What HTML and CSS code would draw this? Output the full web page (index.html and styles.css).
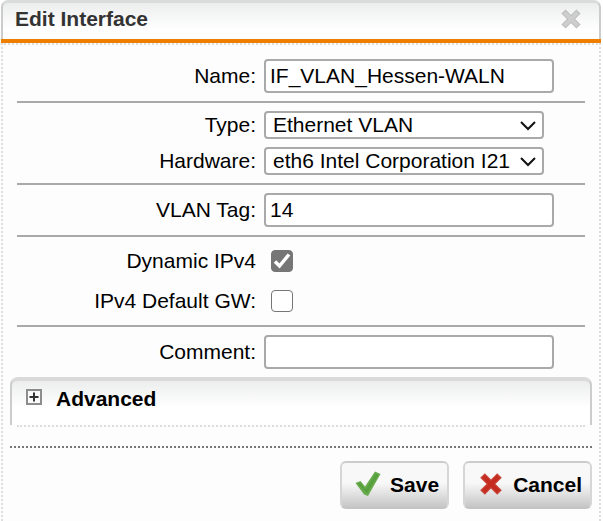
FILE: index.html
```html
<!DOCTYPE html>
<html lang="en">
<head>
<meta charset="utf-8">
<title>Edit Interface</title>
<link rel="stylesheet" href="styles.css">
</head>
<body>
<form class="dialog">
  <header class="dialog-header">
    <h1 class="dialog-title">Edit Interface</h1>
    <button type="button" class="close" aria-label="Close">
      <svg width="20" height="20" viewBox="0 0 20 20"><path d="M2.500 2.500L17.500 17.500M17.500 2.500L2.500 17.500" stroke="#c0c0c0" stroke-width="6"/><path d="M3.500 3.500L16.500 16.500M16.500 3.500L3.500 16.500" stroke="#cecece" stroke-width="3.500"/></svg>
    </button>
  </header>
  <div class="dialog-body">
    <div class="fields">
      <div class="group">
        <div class="row"><label for="name">Name:</label><input class="text" id="name" type="text" value="IF_VLAN_Hessen-WALN"></div>
      </div>
      <div class="group">
        <div class="row">
          <label for="type">Type:</label>
          <div class="select">
            <select id="type"><option>Ethernet VLAN</option></select>
            <svg class="chevron" width="16" height="10" viewBox="0 0 16 10"><path d="M1 1L8 8L15 1" fill="none" stroke="#111" stroke-width="2"/></svg>
          </div>
        </div>
        <div class="row">
          <label for="hardware">Hardware:</label>
          <div class="select">
            <select id="hardware"><option>eth6 Intel Corporation I211</option></select>
            <svg class="chevron" width="16" height="10" viewBox="0 0 16 10"><path d="M1 1L8 8L15 1" fill="none" stroke="#111" stroke-width="2"/></svg>
          </div>
        </div>
      </div>
      <div class="group">
        <div class="row"><label for="tag">VLAN Tag:</label><input class="text" id="tag" type="text" value="14"></div>
      </div>
      <div class="group checks">
        <div class="row">
          <label for="dynamic">Dynamic IPv4</label>
          <div class="check">
            <input id="dynamic" type="checkbox" checked>
            <svg class="tick" width="22" height="22" viewBox="0 0 22 22"><path d="M4 11.500L8.500 16L18 4.500" fill="none" stroke="#fff" stroke-width="3.500"/></svg>
          </div>
        </div>
        <div class="row">
          <label for="gateway">IPv4 Default GW:</label>
          <div class="check">
            <input id="gateway" type="checkbox">
            <svg class="tick" width="22" height="22" viewBox="0 0 22 22"><path d="M4 11.500L8.500 16L18 4.500" fill="none" stroke="#fff" stroke-width="3.500"/></svg>
          </div>
        </div>
      </div>
      <div class="group">
        <div class="row"><label for="comment">Comment:</label><input class="text" id="comment" type="text"></div>
      </div>
    </div>
    <section class="advanced">
      <button type="button" class="advanced-toggle" aria-expanded="false">
        <svg width="16" height="16" viewBox="0 0 16 16"><rect x="1" y="1" width="14" height="14" fill="#fafafa" stroke="#8c8c8c" stroke-width="2"/><path d="M3.500 8H12.500M8 3.500V12.500" stroke="#333" stroke-width="2"/></svg>
        Advanced
      </button>
    </section>
    <footer class="actions">
      <button type="submit" class="button">
        <svg width="26" height="26" viewBox="0 0 26 26"><path d="M.5 12L5.500 10L10 15.500L20 .5L25.500 3L13 25L9 23.500Z" fill="#68ac4e"/><path d="M2.500 12.500L5 11.500L10.500 18.500L20.500 2.500L23.500 4L12 22.500Z" fill="#56a03d"/></svg>
        Save
      </button>
      <button type="button" class="button">
        <svg width="26" height="26" viewBox="0 0 26 26"><path d="M4.500 4.500L21.500 21.500M21.500 4.500L4.500 21.500" stroke="#c8453a" stroke-width="6.500"/><path d="M5.500 5.500L20.500 20.500M20.500 5.500L5.500 20.500" stroke="#c62b20" stroke-width="4"/></svg>
        Cancel
      </button>
    </footer>
  </div>
</form>
</body>
</html>
```
FILE: styles.css
```css
* {
  box-sizing: border-box;
}

body {
  margin: 0;
  background: #fff;
  color: #000;
  font: 21px/24px "Liberation Sans", Arial, sans-serif;
}

input,
select,
button {
  margin: 0;
  color: inherit;
  font: inherit;
}

.dialog {
  display: flex;
  flex-direction: column;
  min-height: 100vh;
  margin: 0 2px 0 1px;
}

.dialog-header {
  display: flex;
  justify-content: space-between;
  height: 39px;
  padding: 4px 18px 0 12px;
  border: 2px solid #ccc;
  border-top: 3px solid #dadcdb;
  border-bottom: 0;
  border-radius: 7px 7px 0 0;
  background: linear-gradient(#eceeed, #fff 75%);
}

.dialog-title {
  margin: 0;
  color: #333;
  font-size: 21px;
}

.close {
  height: 24px;
  padding: 0;
  border: 0;
  background: none;
}

.close svg,
.button svg,
.advanced-toggle svg {
  display: block;
}

.dialog-body {
  flex: 1;
  padding: 6px 7px 10px;
  border: 2px dotted #ddd;
  border-bottom: 0;
  background: #fdfdfd;
  box-shadow: 0 -4px #ee7f00;
  margin-top: 4px;
}

.fields {
  padding: 0 7px;
}

.group {
  display: grid;
  gap: 8px;
  padding: 8px 0;
  border-bottom: 2px solid #a9a9a9;
}

.group:last-child {
  border-bottom: 0;
}

.checks {
  gap: 16px;
  padding: 12px 0;
}

.row {
  display: grid;
  grid-template-columns: 239px minmax(0, 1fr);
  column-gap: 8px;
  align-items: center;
  padding-right: 31px;
}

label {
  text-align: right;
}

.text {
  width: 100%;
  height: 34px;
  padding: 0 4px;
  border: 2px solid #a9a9a9;
  border-radius: 4px;
  background: #fff;
}

.select {
  position: relative;
  margin-right: 10px;
}

select {
  display: block;
  width: 100%;
  height: 28px;
  padding: 0 32px 0 7px;
  appearance: none;
  border: 2px solid #a9a9a9;
  border-radius: 4px;
  background: #fff;
}

.chevron {
  position: absolute;
  top: 10px;
  right: 8px;
  pointer-events: none;
}

.check {
  position: relative;
  height: 24px;
  padding: 1px 7px;
}

.check input {
  display: block;
  width: 22px;
  height: 22px;
  appearance: none;
  border: 1px solid #767676;
  border-radius: 4px;
  background: #fff;
}

.check input:checked {
  background: #767676;
}

.tick {
  position: absolute;
  top: 1px;
  left: 7px;
  visibility: hidden;
  pointer-events: none;
}

.check input:checked + .tick {
  visibility: visible;
}

.advanced {
  height: 48px;
  border: 2px solid #ccc;
  border-top: 4px solid #dadada;
  border-bottom: 0;
  border-radius: 8px 8px 0 0;
  background: linear-gradient(#eceeed, #fff 60%);
}

.advanced-toggle {
  display: flex;
  align-items: center;
  gap: 14px;
  width: 100%;
  padding: 6px 14px;
  border: 0;
  background: none;
  font-weight: bold;
  text-align: left;
}

.advanced-toggle svg {
  margin-bottom: 4px;
}

.advanced::after {
  content: "";
  display: block;
  margin: 8px 5px 0;
  border-top: 2px dotted #ddd;
}

.actions {
  display: flex;
  justify-content: flex-end;
  gap: 14px;
  margin-top: 21px;
  padding-top: 13px;
  border-top: 2px dotted #777;
}

.button {
  display: flex;
  align-items: center;
  gap: 9px;
  height: 48px;
  padding: 0 8px 0 13px;
  border: 2px solid #d6d6d6;
  border-top-color: #ccc;
  border-bottom-color: #c4c4c4;
  border-radius: 6px;
  background: linear-gradient(#f8f8f8 45%, #c6c6c6);
  font-weight: bold;
}

.button svg {
  margin-bottom: 2px;
}
```
